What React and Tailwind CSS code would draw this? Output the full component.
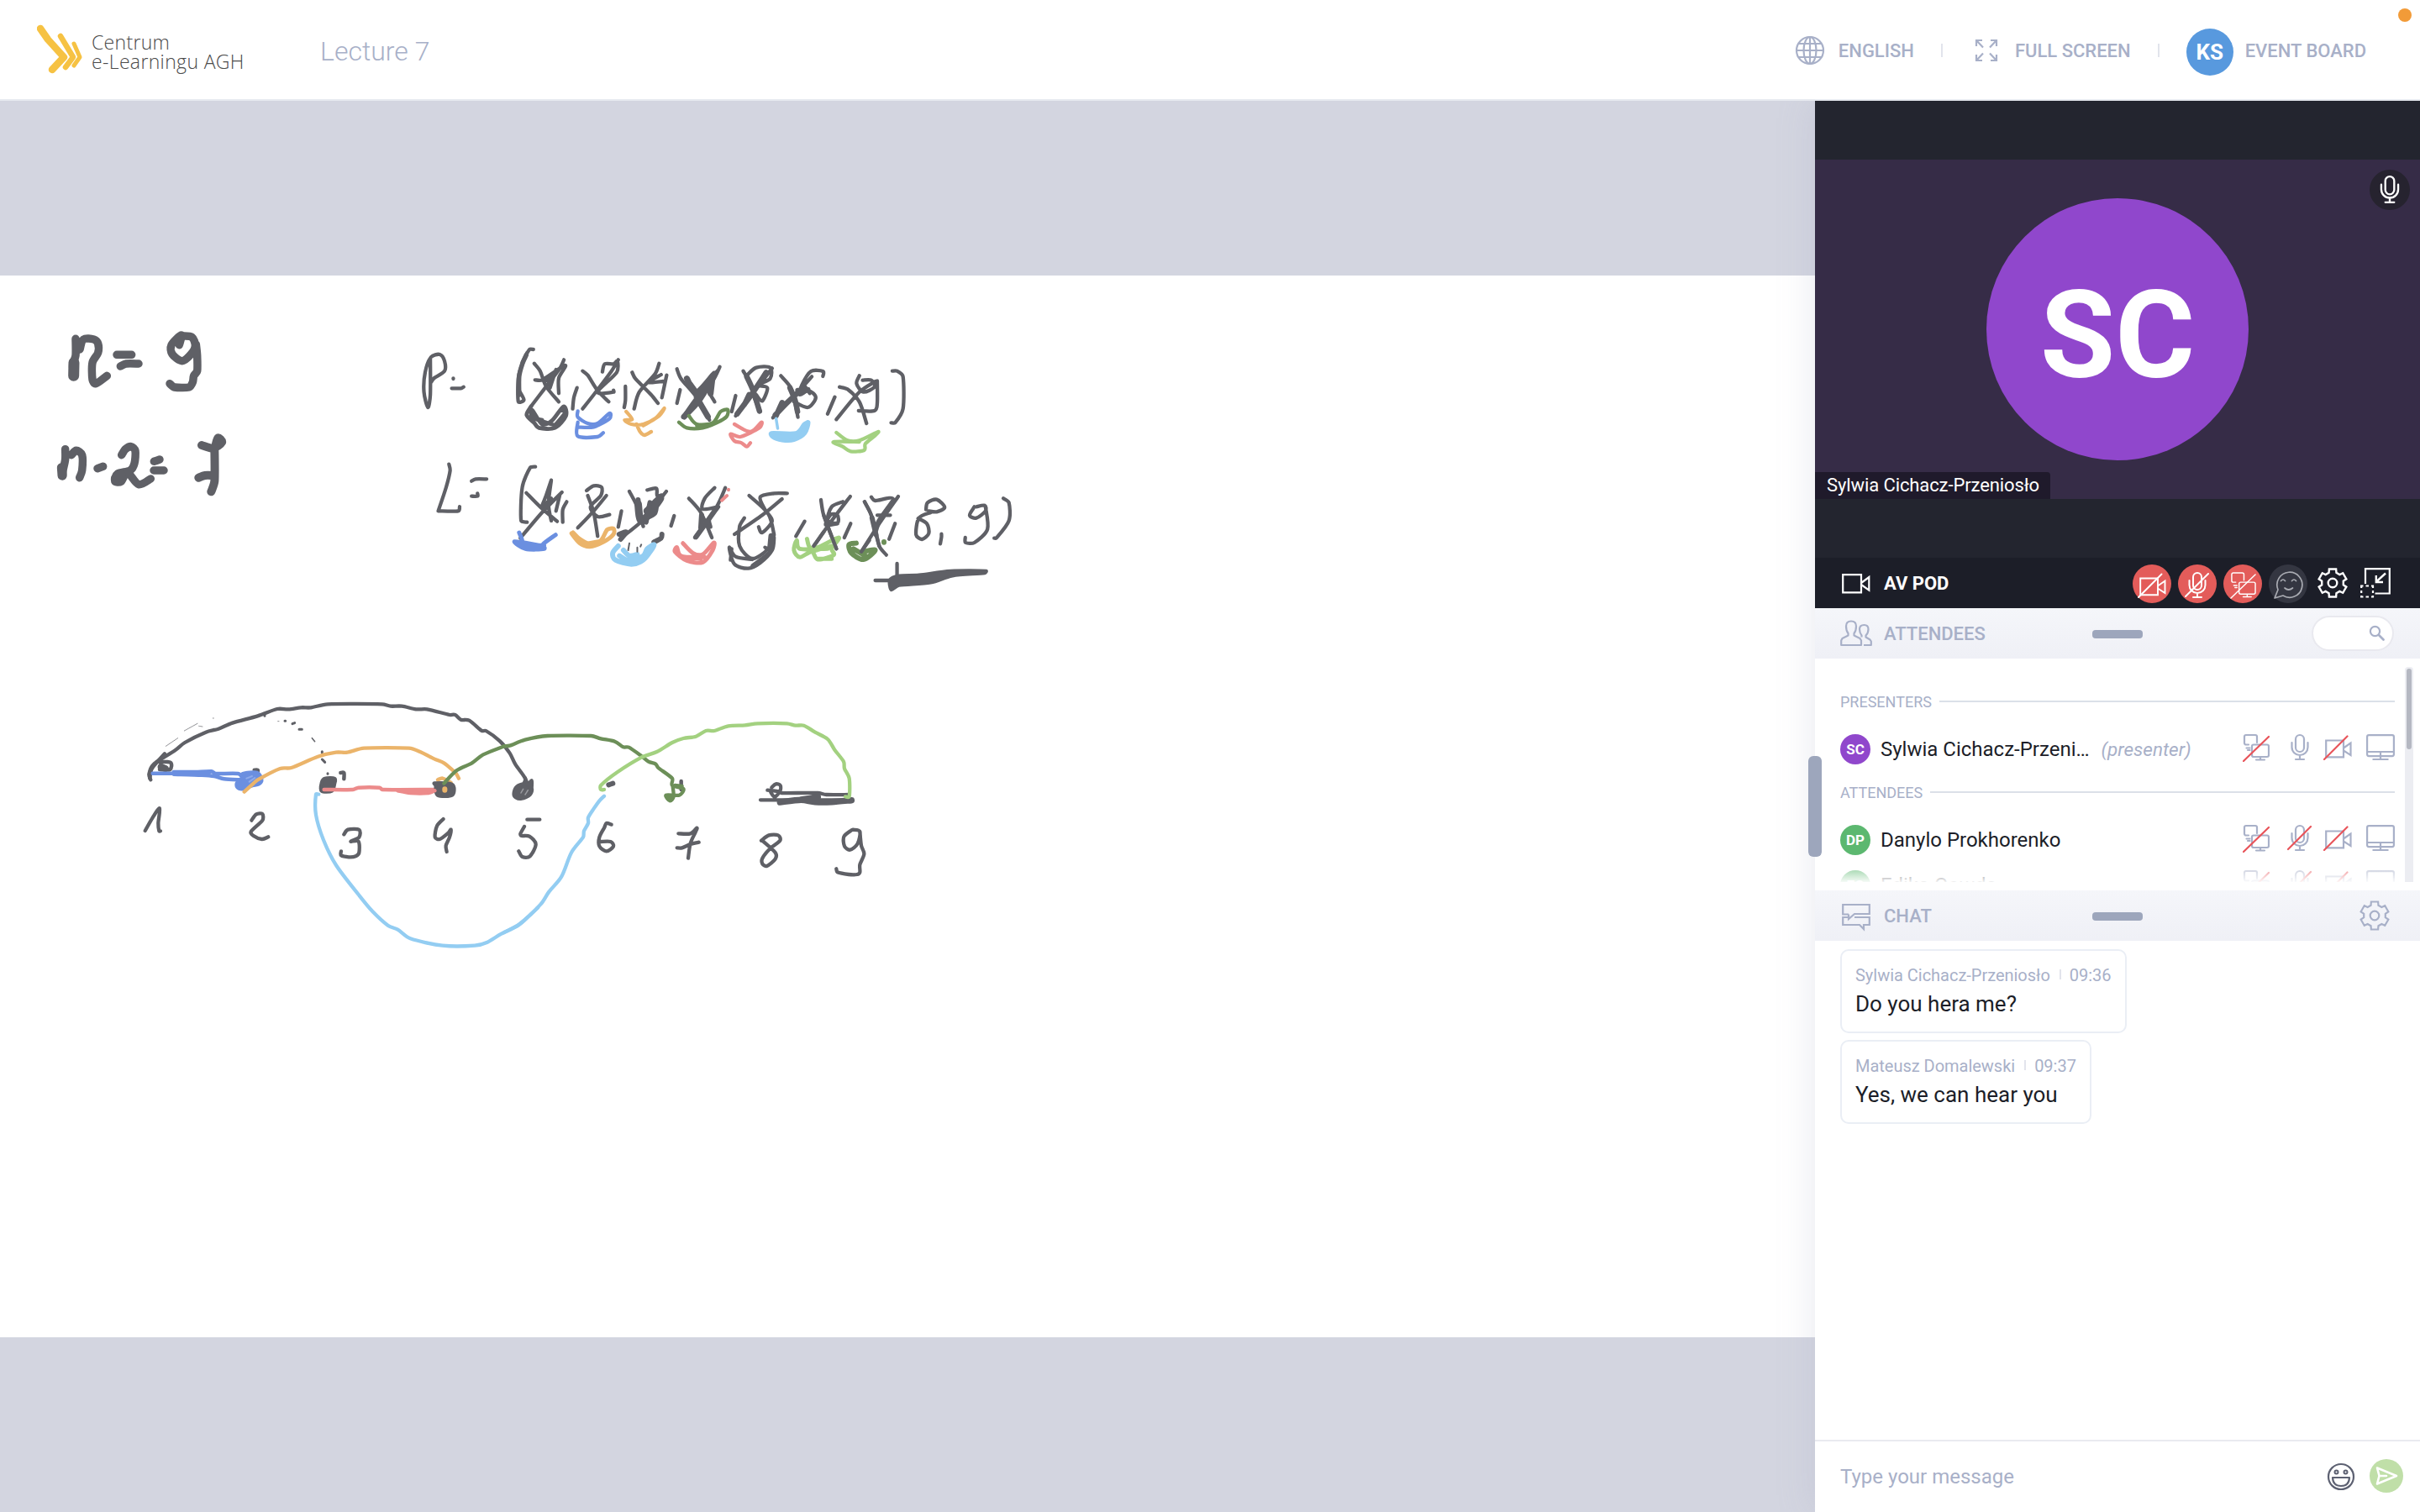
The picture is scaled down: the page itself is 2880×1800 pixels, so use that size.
import React from "react";

const INK = "#5f6066";
const BLUE = "#6b8fe0";
const ORANGE = "#ebb46a";
const SKY = "#93cdf2";
const RED = "#ec8b8b";
const GREEN = "#6c8f58";
const LIME = "#a3d180";

/* Turns an absolute M/L/H/V/Z polyline into a softly rounded pen curve. */
function soften(d) {
  return d
    .split("M")
    .filter(Boolean)
    .map((part) => {
      const closed = part.includes("Z");
      const pts = [];
      const tokens = `L${part}`.match(/[LHV][^LHVZ]*/g);
      tokens.forEach((tok) => {
        const n = (tok.slice(1).match(/-?[\d.]+/g) || []).map(Number);
        const last = pts[pts.length - 1];
        if (tok[0] === "H") pts.push([n[0], last[1]]);
        else if (tok[0] === "V") pts.push([last[0], n[0]]);
        else for (let i = 0; i + 1 < n.length; i += 2) pts.push([n[i], n[i + 1]]);
      });
      const count = pts.length;
      const at = (i) => (closed ? pts[(i + count) % count] : pts[Math.max(0, Math.min(count - 1, i))]);
      let out = `M${pts[0][0]} ${pts[0][1]}`;
      const end = closed ? count : count - 1;
      for (let i = 0; i < end; i += 1) {
        const [a, b, c, e] = [at(i - 1), at(i), at(i + 1), at(i + 2)];
        const len = Math.hypot(c[0] - b[0], c[1] - b[1]);
        const handle = (p, q) => {
          const dx = q[0] - p[0];
          const dy = q[1] - p[1];
          const m = Math.hypot(dx, dy) || 1;
          const k = Math.min(m / 6.5, len / 3) / m;
          return [dx * k, dy * k];
        };
        const h1 = handle(a, c);
        const h2 = handle(b, e);
        out += `C${(b[0] + h1[0]).toFixed(1)} ${(b[1] + h1[1]).toFixed(1)} ${(c[0] - h2[0]).toFixed(1)} ${(c[1] - h2[1]).toFixed(1)} ${c[0]} ${c[1]}`;
      }
      return out + (closed ? "Z" : "");
    })
    .join("");
}

/* One pen stroke (or several) of the whiteboard. */
function Pen({ d, c = INK, w = 4.3, fill = "none" }) {
  return (
    <path
      d={soften(d)}
      stroke={c}
      strokeWidth={w}
      fill={fill}
      strokeLinecap="round"
      strokeLinejoin="round"
      vectorEffect="non-scaling-stroke"
    />
  );
}

function Whiteboard() {
  return (
    <svg className="block h-[1264px] w-[2160px] bg-white" viewBox="0 328 2160 1264" fill="none">
      {/* n = 9, n - 2 = 7 */}
      <g transform="translate(40 360) scale(0.33333)">
        <Pen w={9.5} d="M150 130V190L140 222L143 265M165 168L178 132L215 132L230 147V180L210 215V275L222 290L262 262M297 187H350M310 228L330 219H375" />
        <Pen w={13} d="M144 215L143 262" />
        <Pen w={9.5} d="M520 152L527 117L492 152L495 185L530 209L562 185L577 155L565 124L530 120M580 150L584 190V245L572 262L568 285L555 303H503L486 290" />
        <Pen w={9.5} d="M113 524V560L105 600L104 620M135 545L152 529L173 545V600L164 626M228 593L248 586M314 545L328 524L348 515L363 530L360 575L345 600L300 612L290 638L312 640L335 608L375 650L418 630M430 568L450 561M429 600H465" />
        <Pen w={11} d="M100 590L102 618M292 630L312 615" />
        <Pen w={10} d="M600 510L640 521L672 500L658 484L650 510M646 520V638L634 676M589 626L612 618H640" />
      </g>

      {/* P and L sequences */}
      <g transform="translate(480 390) scale(0.47194 0.33333)">
        <Pen d="M68 110V240L62 285L52 230L55 160L70 105L92 96L104 120V155L78 180L70 195M126 181V183M122 217H145L152 212" />
        <Pen d="M328 78H318L300 130L290 180V265L304 258L292 225M312 90L300 125" />
        <Pen w={5.5} d="M310 98L300 130L292 175V240" />
        <Pen d="M330 128L345 155L360 210L392 265M405 115L395 145L355 220L320 285M332 187H350L408 135L392 180V235M398 140L362 190M385 150L370 215" />
        <Pen w={4.8} d="M322 282L311 312L330 340L342 358H382L410 315L404 282L375 332L350 345L325 295L325 320L350 330M396 295L410 300L385 345M330 325L380 348" />
        <Pen d="M438 215L430 250L427 290M452 155L465 170L490 225L518 265M542 115L525 155L480 240L452 290M502 158L508 130L530 130L540 120L538 160L490 230H530V224" />
        <Pen d="M560 210V260L557 285M577 160L585 182L625 240L642 270M645 128L635 165L595 230L582 290M650 168L618 195L655 192M664 170L652 250" />
        <Pen d="M698 222L690 270M690 148L700 182L740 250L772 330M798 140L780 190L740 250L705 320M795 150L765 205L785 265" />
        <Pen w={7} d="M715 182L740 230L785 165L745 262L708 318M722 200L742 240M740 250L768 318M780 175L775 235" />
        <Pen d="M838 243L828 300M857 155L875 200L885 250L900 300M930 145L900 200L860 270L838 315M868 168L890 143L925 143V182L895 205L918 215L905 262L890 240" />
        <Pen w={6.5} d="M866 175L882 225L898 298M915 160L880 235L842 308M872 240L860 275" />
        <Pen d="M952 172L975 210L985 250L995 320M1030 175L1000 222L960 280L932 322M1058 174V156H1028L1005 205L1000 240L1022 225L1040 250L1020 285L985 265M1010 205L1025 235" />
        <Pen w={6.5} d="M975 215L988 260L994 300M1008 215L970 265L938 312M955 268L940 315M995 225L1020 222" />
        <Pen d="M1088 248L1070 308M1100 212L1120 220L1150 265L1168 342M1190 192L1150 230L1092 328M1150 172L1143 200L1160 230L1188 212L1180 188H1158M1195 190V270L1188 297H1148" />
        <Pen d="M1233 155H1245L1260 175V290L1240 340H1230" />
        <Pen c={BLUE} d="M440 298V320L465 342H490L520 306V325L480 355H440M440 338V388L490 390L504 376" />
        <Pen c={ORANGE} d="M562 300L577 328L558 330L575 345H605L635 325L658 288L645 315L605 350M588 345L597 372L608 384L625 372" />
        <Pen c={GREEN} d="M720 315L740 345L780 340L800 300L818 293L815 318L790 340L755 358H715L695 338M740 350L770 348" />
        <Pen c={RED} d="M835 345L875 372L903 338L898 358L850 390L825 380L835 405L853 412L866 425L875 412" />
        <Pen c={SKY} w={3.5} d="M940 325L944 360" />
        <Pen c={SKY} fill={SKY} d="M928 376H990L1010 345L1022 338L1013 378L985 402L955 403L930 390Z" />
        <Pen c={LIME} d="M1092 375L1120 403H1150L1197 372L1190 385L1165 415L1162 438L1128 442L1108 425L1085 408H1150" />

        <Pen d="M115 488L118 510L108 570L88 655M88 655H138L142 640M172 548L182 541H210M172 602H187V592" />
        <Pen d="M333 497L320 500L300 570L297 690L312 695M310 590L345 640L388 692M400 588L350 660L295 752M373 545L360 600L350 640L373 610M373 545L366 630L373 690M395 595L385 655M412 622L402 650V695" />
        <Pen d="M465 600L480 660L490 745M512 600L480 655L440 715M462 582L480 565L500 570L498 600L472 640L490 675L520 668M550 655L542 712" />
        <Pen d="M570 585L590 640L605 710M663 585L610 680L555 745M615 580L638 574L640 600L652 598M640 635L635 665L610 685" />
        <Pen w={9} d="M592 630L602 690L648 610L615 655" />
        <Pen w={6} d="M544 738L562 730L548 756M652 738L650 752L632 766M592 615L598 690M622 625L612 695" />
        <Pen d="M683 672L675 708M720 610L750 660L778 750M812 572L790 640L735 750M785 572L760 610L755 648L795 640M795 640L772 680L775 712" />
        <Pen w={6} d="M790 645L738 748M752 670L750 715" />
        <Pen d="M872 600L920 665L935 740M955 612L905 670L835 738M968 592H935L900 605L912 650L930 690L905 732L896 712M860 680L848 710V780L880 825L920 790L935 740" />
        <Pen d="M935 750L930 795L900 840L870 860L835 845L822 785L838 818L880 828M828 790L825 830M912 785L925 800L880 850" />
        <Pen w={7} d="M928 745L925 790" />
        <Pen d="M1012 692L990 745M1053 615L1060 670L1092 790M1127 603L1080 690L1035 780M1108 622L1080 640L1070 690L1095 697V670L1078 668L1065 705L1095 700M1128 700L1112 750" />
        <Pen d="M1163 622L1180 670L1200 780L1218 812M1248 603L1200 700L1155 800M1180 605L1190 618L1235 612L1205 690M1195 670H1228M1240 700L1225 755" />
        <Pen w={6} d="M1235 620L1200 690L1190 730M1182 680L1192 740" />
        <Pen d="M1318 650L1322 625L1345 614L1365 642L1345 658L1325 655M1330 660L1300 680L1293 740L1308 756L1325 735L1320 700L1298 682M1357 737V748L1354 772" />
        <Pen d="M1440 640L1428 670L1445 680L1468 655L1466 635L1445 640M1468 640L1473 720L1440 768H1418L1417 750M1513 610L1527 625V690L1495 752H1490" />
        <Pen c={BLUE} w={5} d="M292 732L300 765H280L308 790H355L352 774L384 740M300 778H355M305 768L350 780" />
        <Pen c={ORANGE} w={5} d="M424 735L445 770L470 782L505 765L530 738V718L514 722L498 760L470 772L445 755L428 732M450 775L500 762" />
        <Pen c={SKY} w={6} d="M542 780L528 805L535 830L575 845L605 830L625 795L632 775L615 790L605 815L570 832L545 815M555 795L570 815L590 810" />
        <Pen w={2} d="M570 770L567 795M590 785V800M600 775L598 782" />
        <Pen c={RED} w={5} d="M705 770L730 805L755 810L783 768L780 795L755 838L715 832L685 800L690 785L700 815L750 825M710 820H760" />
        <Pen c={RED} w={4} d="M820 578V580M803 617L816 600" />
        <Pen c={LIME} w={5} d="M1018 755L1025 785H1045L1098 750L1080 790L1085 812L1045 828L1030 800L1000 820L985 795L992 760L1000 790H1070M1030 800L1080 780M1045 826H1080" />
        <Pen c={GREEN} w={6} d="M1142 770L1124 775L1130 805L1160 828L1190 795L1160 800M1135 790L1165 815M1212 765V767" />
        <Pen d="M1163 622L1180 670L1200 780M1060 670L1092 790M1060 730L1035 780M1175 760L1155 800" />
        <Pen d="M1190 903H1240M1245 843V900" />
        <Pen w={3} fill={INK} d="M1230 938L1226 900L1250 885L1300 882L1380 868H1470L1466 878L1385 888L1330 912L1250 922Z" />
      </g>

      {/* Tree over nodes 1 - 5 */}
      <g transform="translate(140 800) scale(0.33333)">
        <Pen w={0.7} d="M172 265L215 236M238 210L285 184M290 193L303 195M340 165H343M572 176H576" />
        <Pen w={3} d="M525 155V157M597 175H599M624 185L632 182M648 205H658M730 312L740 322M730 284V288M750 362V364" />
        <Pen w={1.5} d="M694 236L704 248" />
        <Pen w={4.3} d="M118 385L112 365L128 330L205 280L240 252L315 215L360 203L410 182L500 157L570 132L610 133L655 127H690L750 115H945L975 122H1015L1065 133H1105L1185 153H1205L1225 170L1255 173L1300 210H1315L1365 247L1400 290L1420 330L1455 380L1450 400" />
        <Pen w={4.5} d="M115 380L122 345L168 292M140 320L188 323L187 348L150 348" />
        <Pen w={8} d="M155 338L170 345" />
        <Pen w={4.5} d="M488 350H500V356" />
        <Pen c={BLUE} w={4.5} d="M125 362H200L335 355L350 363H430L450 380M200 357H330M200 365L300 368L345 372L380 382L440 385" />
        <Pen c={BLUE} fill={BLUE} w={3} d="M445 362L500 358L516 385L505 402L480 408L445 420L425 412L424 395L440 385Z" />
        <Pen c="#8fabea" w={2} d="M460 380L480 372M470 392L490 378" />
        <Pen c={ORANGE} w={4.3} d="M452 428L485 398L500 385L580 345L620 342L715 302L780 287H820L880 272H1040L1080 285L1130 310L1165 325L1195 350L1208 362L1218 380" />
        <Pen w={4} fill={INK} d="M740 380H775V398L765 425H728V395Z" />
        <Pen w={4.5} d="M796 360H808V382" />
        <Pen c={RED} w={4.5} d="M737 420H840L860 413H935L945 420H1132M1000 424L1045 432H1110L1132 424" />
        <Pen c={ORANGE} w={4.5} d="M1143 385L1160 380L1190 395" />
        <Pen w={4} fill={INK} d="M1130 397L1195 402V440H1142L1135 405Z" />
        <Pen c={RED} w={4.5} d="M1110 424H1132" />
        <Pen c={ORANGE} w={6} d="M1168 418V422" />
        <Pen c={GREEN} w={4.3} d="M1165 398L1210 352L1265 325L1305 295L1380 265" />
        <Pen c={SKY} w={4.3} d="M718 437H708V510L735 600L780 690L860 795L910 855L965 905L1000 920L1045 952L1160 977H1275L1320 965L1370 935L1430 905L1470 870L1500 842" />
        <Pen d="M98 567L125 520L150 487L145 540L148 568H153" />
        <Pen d="M478 530L495 508L517 507V530L476 570L485 585L515 597L538 589" />
        <Pen d="M808 580L822 563H862V590L832 605H860L862 645L850 658L825 661L798 655V640" />
        <Pen d="M1163 525L1140 550L1133 590L1150 597L1180 575L1190 563L1185 590L1172 620L1175 642" />
      </g>

      {/* Tree over nodes 5 - 9 */}
      <g transform="translate(600 820) scale(0.33333)">
        <Pen w={4.5} fill={INK} d="M35 375L45 350L75 340L98 355L92 378L62 392L42 388Z" />
        <Pen w={4.5} d="M75 320L85 340L98 328V350" />
        <Pen c="#9a9ba0" w={1.5} d="M60 372L68 358M75 378L85 362" />
        <Pen d="M82 467H127M72 492L58 518L62 525L90 527L113 555L92 598L65 600L52 580" />
        <Pen w={6} d="M373 343L388 338" />
        <Pen d="M383 485L365 480L358 495L340 530V562L365 580L390 563L380 546H345" />
        <Pen w={4.5} d="M632 330V360" />
        <Pen d="M622 517H665L688 497L683 512L665 552L657 605M617 568H635L665 555L695 548" />
        <Pen d="M918 542L945 523L978 523L985 542L950 570L922 605V625L938 633L968 608V585L925 545" />
        <Pen d="M1240 505L1213 528L1215 562L1235 575L1262 553L1270 510L1245 503M1270 510L1275 560L1285 590L1270 628V655L1260 663H1230L1190 655L1186 643" />
        <Pen w={4.3} d="M940 362L985 368L990 372H1120L1150 378H1230M915 397H1240M955 352L970 340L986 345L985 365L966 386L952 370" />
        <Pen w={7.5} d="M985 405L1060 397L1110 404H1170L1240 398M1060 396L1120 386" />
        <Pen c={GREEN} w={4.3} d="M0 205L20 203L75 182L155 168H310L345 178L395 188L425 208L445 209L490 240L515 260L540 268L550 282L600 320V345L640 357L625 380H578L592 400L605 385L602 350M610 345L635 348M580 388L600 390" />
        <Pen c={LIME} w={4.3} d="M357 360H345V345L405 297L490 245L545 225L600 192L640 177L685 170L720 150H750L800 133L860 130L905 124H1010L1040 131H1070L1110 155L1155 180L1180 218L1212 260L1215 285L1232 320V385H1218" />
        <Pen c={SKY} w={4.3} d="M0 870L55 840L130 770L160 725L205 670L240 585L282 530L285 508L300 480V460L320 428L340 400L357 383" />
      </g>
    </svg>
  );
}

function Logo() {
  return (
    <svg className="h-[60px] w-[56px]" viewBox="0 0 56 60" fill="none" stroke="#f6c243" strokeLinecap="round" strokeLinejoin="round">
      <path d="M4 5L13 18L32 39L18 54" strokeWidth="8.5" />
      <path d="M28 14L43 39L34 51" strokeWidth="6.5" />
      <path d="M44 23L51 39L44 49" strokeWidth="5" />
    </svg>
  );
}

function VideoIcon({ className, sw = 2 }) {
  return (
    <svg className={className} viewBox="0 0 34 24" fill="none" stroke="currentColor" strokeWidth={sw}>
      <path d="M1.200 1.200H23V22.300H1.200ZM23 11L32.300 4V19.600L23 13" />
    </svg>
  );
}

/* Status glyphs with an optional slash through them. */
function NetIcon({ className, slash = "#e8545a", sw = 2.2 }) {
  return (
    <svg className={className} viewBox="0 0 32 34" fill="none" stroke="currentColor" strokeWidth={sw} strokeLinecap="round" strokeLinejoin="round">
      <path d="M7 13.500H4a2 2 0 0 1-2-2V4a2 2 0 0 1 2-2h11a2 2 0 0 1 2 2v7M4.500 17.500h4M6 20h2.500" />
      <rect x="11" y="13.500" width="20" height="14.500" rx="2" />
      <path d="M16 31.500h10M21 29v2" />
      <path d="M1 33L31 4" stroke={slash} />
    </svg>
  );
}

function MicIcon({ className, slash, sw = 2.2 }) {
  return (
    <svg className={className} viewBox="0 0 30 34" fill="none" stroke="currentColor" strokeWidth={sw} strokeLinecap="round">
      <rect x="10" y="2" width="10" height="20" rx="5" />
      <path d="M5.500 11v5.500a9.500 9.500 0 0 0 19 0V11M15 26v4.500M10 31h10" />
      {slash ? <path d="M1 30L28 3" stroke={slash} /> : null}
    </svg>
  );
}

function CamOffIcon({ className, slash = "#e8545a", sw = 2.2 }) {
  return (
    <svg className={className} viewBox="0 0 34 30" fill="none" stroke="currentColor" strokeWidth={sw}>
      <path d="M3.200 6.500H24V26.300H3.200ZM24 15.500L32.500 9.500V24L24 18.500" />
      <path d="M1 29L28.500 1.500" stroke={slash} strokeLinecap="round" />
    </svg>
  );
}

function MonitorIcon({ className }) {
  return (
    <svg className={className} viewBox="0 0 34 32" fill="none" stroke="currentColor" strokeWidth="2.200" strokeLinejoin="round">
      <rect x="1.100" y="1.100" width="31.800" height="25" rx="2" />
      <path d="M1 21H33M17 21V30M7.500 30H26.500" />
    </svg>
  );
}

function gearPath(c, outer, inner) {
  const pts = [];
  const rad = Math.PI / 180;
  for (let k = 0; k < 6; k += 1) {
    const a = k * 60 - 90;
    [
      [inner, a - 20],
      [outer, a - 14],
      [outer, a + 14],
      [inner, a + 20],
    ].forEach(([r, t]) => pts.push(`${(c + r * Math.cos(t * rad)).toFixed(2)} ${(c + r * Math.sin(t * rad)).toFixed(2)}`));
  }
  return `M${pts.join("L")}Z`;
}

function GearIcon({ className, sw = 2.2 }) {
  return (
    <svg className={className} viewBox="0 0 36 36" fill="none" stroke="currentColor" strokeWidth={sw}>
      <path d={gearPath(18, 17, 13)} />
      <circle cx="18" cy="18" r="5.300" />
    </svg>
  );
}

function RoundButton({ className, children }) {
  return <div className={`flex size-[46px] items-center justify-center rounded-full ${className}`}>{children}</div>;
}

function Header() {
  return (
    <header className="relative z-10 flex h-[120px] shrink-0 items-center border-b-2 border-[#e7eaf0] bg-white pr-[64px] pl-[44px] text-[#a8b0c8]">
      <Logo />
      <div className="mt-[3px] ml-[9px] w-[182px] pt-[3px] font-['Open_Sans'] text-[23px] leading-[23px] font-light whitespace-nowrap text-[#4a4a4a]">
        <div className="tracking-[0.300px]">Centrum</div>
        <div className="tracking-[0.350px]">e-Learningu AGH</div>
      </div>
      <div className="ml-[90px] pt-[4px] text-[32px] font-light">Lecture 7</div>
      <div className="ml-auto flex items-center text-[22px] font-medium">
        <svg className="mt-[2px] mr-[16px] size-[36px]" viewBox="0 0 36 36" fill="none" stroke="currentColor" strokeWidth="2.200">
          <circle cx="18" cy="18" r="16" />
          <ellipse cx="18" cy="18" rx="7.500" ry="16" />
          <path d="M18 2V34M2 18H34M4.500 10H31.500M4.500 26H31.500" />
        </svg>
        <span className="pt-[4px]">ENGLISH</span>
        <i className="mt-[2px] ml-[32px] h-[16px] w-[2px] bg-[#e2e4ec]" />
        <svg className="mt-[2px] ml-[38px] size-[28px]" viewBox="0 0 28 28" fill="none" stroke="currentColor" strokeWidth="2.200">
          <path d="M2 9V2H9M2 2L10 10.500M19 2H26V9M26 2L18 10.500M26 19V26H19M26 26L18 17.500M9 26H2V19M2 26L10 17.500" />
        </svg>
        <span className="ml-[20px] pt-[4px]">FULL SCREEN</span>
        <i className="mt-[2px] ml-[32px] h-[16px] w-[2px] bg-[#e2e4ec]" />
        <div className="mt-[6px] ml-[32px] flex size-[56px] items-center justify-center rounded-full bg-[#5899de] pt-[2px] text-[26px] font-bold text-white">KS</div>
        <span className="ml-[14px] pt-[4px]">EVENT BOARD</span>
      </div>
    </header>
  );
}

function AvPod() {
  return (
    <section className="shrink-0 bg-[#23252f]">
      <div className="h-[70px]" />
      <div className="relative flex h-[404px] items-center justify-center bg-[#362c47]">
        <div className="flex size-[312px] items-center justify-center rounded-full bg-[#9047cc] pt-[14px] text-[145px] leading-none font-bold text-white">SC</div>
        <div className="absolute top-[12px] right-[12px] flex size-[48px] items-center justify-center rounded-full bg-[#26232f] text-white">
          <MicIcon className="h-[36px] w-[32px]" />
        </div>
        <div className="absolute bottom-0 left-0 flex h-[32px] w-[280px] items-center rounded-tr-[4px] bg-[#1f1a2b] pt-[1px] pl-[14px] text-[22px] tracking-[-0.100px] whitespace-nowrap text-white">
          Sylwia Cichacz-Przeniosło
        </div>
      </div>
      <div className="h-[70px]" />
      <div className="flex h-[60px] items-center bg-[#1c1e28] pr-[35px] pl-[32px] text-white">
        <VideoIcon className="mt-[2px] h-[24px] w-[34px]" sw={2.2} />
        <span className="ml-[16px] pt-[2px] text-[22px] font-bold">AV POD</span>
        <div className="mt-[2px] ml-auto flex items-center gap-[8px]">
          <RoundButton className="bg-[#e35c5a]"><CamOffIcon className="mt-[4px] h-[30px] w-[34px]" slash="#fff" sw={1.9} /></RoundButton>
          <RoundButton className="bg-[#e35c5a]"><MicIcon className="mt-[4px] h-[34px] w-[30px]" slash="#fff" sw={2} /></RoundButton>
          <RoundButton className="bg-[#e35c5a]"><NetIcon className="mt-[2px] h-[33px] w-[31px]" slash="#fff" sw={1.5} /></RoundButton>
          <RoundButton className="bg-[#343641] text-[#a9abb2]">
            <svg className="mt-[2px] h-[36px] w-[36px]" viewBox="0 0 36 36" fill="none" stroke="currentColor" strokeWidth="1.700" strokeLinecap="round" strokeLinejoin="round">
              <path d="M6 24a15 15 0 1 1 6 7L2 34Z" />
              <path d="M9.500 13.500q2.500-3 5 0M22.500 13.500q2.500-3 5 0M14 22q4.500 4 9.500 0" />
            </svg>
          </RoundButton>
          <GearIcon className="-mt-[2px] ml-[4px] size-[36px]" sw={2.4} />
          <svg className="-mt-[2px] ml-[7px] size-[36px]" viewBox="0 0 36 36" fill="none" stroke="currentColor" strokeWidth="2.200">
            <path d="M6 19V1.200H34.800V30.500H17.500" />
            <path d="M30 6.500L19 16.500M18.800 9V17H27" strokeWidth="2.400" />
            <path d="M0 21.500H3.500M6.500 21.500H10M13 21.500H16M1.200 21V24M15 21V24M1.200 27V30M15 27V30M0 34.500H3.500M6.500 34.500H10M13 34.500H16M1.200 33V35M15 33V35" />
          </svg>
        </div>
      </div>
    </section>
  );
}

function PanelHeader({ icon, title, children }) {
  return (
    <div className="grid h-[60px] shrink-0 grid-cols-[1fr_60px_1fr] items-center bg-gradient-to-b from-[#f5f6fa] to-[#eff0f6] text-[#a8b0c8]">
      <div className="flex items-center pl-[30px]">
        <div className="flex w-[52px] items-center">{icon}</div>
        <span className="pt-[2px] text-[22px] font-medium">{title}</span>
      </div>
      <div className="mt-[2px] h-[10px] rounded-[4px] bg-[#9da6bc]" />
      <div className="flex justify-end">{children}</div>
    </div>
  );
}

function GroupTitle({ children }) {
  return (
    <div className="flex h-[28px] items-center text-[18px] text-[#a8b0c8]">
      <span className="pt-[2px]">{children}</span>
      <i className="ml-[9px] h-[2px] flex-1 bg-[#dbe0e8]" />
    </div>
  );
}

function Attendee({ initials, color, name, role, mic }) {
  return (
    <div className="flex h-[54px] items-center">
      <div className={`flex size-[36px] items-center justify-center rounded-full pt-[1px] text-[17px] font-bold text-white ${color}`}>{initials}</div>
      <span className="ml-[12px] text-[24px] whitespace-nowrap text-[#1c1e28]">{name}</span>
      {role ? <span className="ml-[14px] text-[22.500px] text-[#a8b0c8] italic">{role}</span> : null}
      <div className="mb-[4px] ml-auto flex items-center text-[#a8b0c8]">
        <NetIcon className="h-[34px] w-[32px]" />
        <MicIcon className="ml-[21px] h-[34px] w-[30px]" slash={mic ? null : "#e8545a"} />
        <CamOffIcon className="ml-[13px] h-[30px] w-[34px]" />
        <MonitorIcon className="ml-[17px] h-[32px] w-[34px]" />
      </div>
    </div>
  );
}

function Attendees() {
  return (
    <section className="shrink-0">
      <PanelHeader
        title="ATTENDEES"
        icon={
          <svg className="h-[32px] w-[38px]" viewBox="0 0 38 32" fill="none" stroke="currentColor" strokeWidth="2.200" strokeLinejoin="round">
            <path d="M1.200 30V24.500L2.500 22L9.500 18.500V16Q7 13 7 7.500Q7 1.500 13 1.500Q19 1.500 19 7.500Q19 13 16.500 16V18.500L23.500 22L25 24.500V30Z" />
            <path d="M28 30H36.800V25.500L35.500 23.500L30.500 20.500V18.500Q33.500 15.500 33.500 11Q33.500 6 28.500 6Q23 6 23 11Q23 15.500 25.500 18.500V20.500" />
          </svg>
        }
      >
        <div className="mr-[31px] flex h-[42px] w-[98px] items-center justify-end rounded-full border-2 border-[#e9e9ef] bg-white pr-[8px]">
          <svg className="size-[20px]" viewBox="0 0 20 20" fill="none" stroke="currentColor" strokeWidth="2.200" strokeLinecap="round">
            <circle cx="7.500" cy="7.500" r="5.600" />
            <path d="M12 12L17.500 17.500" strokeWidth="2.800" />
          </svg>
        </div>
      </PanelHeader>
      <div className="relative h-[276px] bg-white pt-[37px] pr-[30px] pl-[30px]">
        <div className="h-[229px] overflow-hidden">
          <GroupTitle>PRESENTERS</GroupTitle>
          <div className="pt-[16px] pb-[10px]">
            <Attendee initials="SC" color="bg-[#9047cc]" name="Sylwia Cichacz-Przeni…" role="(presenter)" mic />
          </div>
          <GroupTitle>ATTENDEES</GroupTitle>
          <div className="pt-[16px]">
            <Attendee initials="DP" color="bg-[#5cb870]" name="Danylo Prokhorenko" />
            <Attendee initials="EG" color="bg-[#5cb870]" name="Edika Gowda" />
          </div>
        </div>
        <div className="absolute right-[18px] bottom-[8px] left-0 h-[32px] bg-gradient-to-b from-white/0 to-white" />
        <div className="absolute top-[10px] right-[8px] h-[256px] w-[10px] rounded-t-[4px] bg-[#ecedf2] p-[2px]">
          <div className="h-[96px] rounded-[3px] bg-[#b5b8c2]" />
        </div>
      </div>
    </section>
  );
}

function Message({ author, time, text }) {
  return (
    <div className="h-[100px] rounded-[10px] border-2 border-[#eaeef5] px-[16px] pt-[14px]">
      <div className="flex h-[30px] items-center text-[20px] tracking-[-0.020px] text-[#a8b0c8]">
        <span>{author}</span>
        <i className="-mt-[2px] mr-[10px] ml-[11px] h-[12px] w-[2px] bg-[#e2e4ec]" />
        <span>{time}</span>
      </div>
      <div className="text-[26px] leading-[38px] text-[#1c1e28]">{text}</div>
    </div>
  );
}

function Chat() {
  return (
    <section className="flex min-h-0 flex-1 flex-col">
      <PanelHeader
        title="CHAT"
        icon={
          <svg className="mt-[3px] ml-[2px] h-[34px] w-[34px]" viewBox="0 0 34 34" fill="none" stroke="currentColor" strokeWidth="2.200">
            <path d="M8 13.500H1.200V2H32.800V13H15L8 19V13.500M8 17H1.200V26H21L26 31V26H32.800V17H15" />
          </svg>
        }
      >
        <GearIcon className="mr-[36px] size-[36px]" />
      </PanelHeader>
      <div className="flex flex-1 flex-col items-start gap-[8px] pt-[10px] pl-[30px]">
        <Message author="Sylwia Cichacz-Przeniosło" time="09:36" text="Do you hera me?" />
        <Message author="Mateusz Domalewski" time="09:37" text="Yes, we can hear you" />
      </div>
      <div className="flex h-[86px] items-center border-t-2 border-[#e9eaf0] pr-[20px] pl-[30px]">
        <span className="text-[24px] text-[#a8b0c8]">Type your message</span>
        <svg className="ml-auto size-[34px]" viewBox="0 0 34 34" fill="none" stroke="#5d6172" strokeWidth="2.200" strokeLinejoin="round">
          <circle cx="17" cy="17" r="15" />
          <circle cx="11.500" cy="11.500" r="2" strokeWidth="2" />
          <circle cx="22.500" cy="11.500" r="2" strokeWidth="2" />
          <path d="M7 18H27Q26.500 28 17 28Q7.500 28 7 18Z" />
        </svg>
        <div className="mb-[3px] ml-[17px] flex size-[40px] items-center justify-center rounded-full bg-[#c0dfa8]">
          <svg className="size-[28px]" viewBox="0 0 28 28" fill="none" stroke="#fff" strokeWidth="2.600" strokeLinejoin="round" strokeLinecap="round">
            <path d="M3 4.500L26 14L3 23.500L5.500 14ZM5.500 14H14" />
          </svg>
        </div>
      </div>
    </section>
  );
}

export default function App() {
  return (
    <div className="relative flex h-[1800px] w-[2880px] flex-col overflow-hidden bg-white font-[Roboto,sans-serif] leading-[1.2]">
      <Header />
      <div className="flex min-h-0 flex-1">
        <main className="flex w-[2160px] flex-col justify-center bg-[#d3d5e0]">
          <Whiteboard />
        </main>
        <aside className="relative flex w-[720px] flex-col bg-white shadow-[0_0_40px_rgba(160,165,190,0.25)]">
          <AvPod />
          <Attendees />
          <Chat />
          <div className="absolute top-[780px] -left-[8px] h-[120px] w-[16px] rounded-[6px] bg-[#9da6bc]" />
        </aside>
      </div>
      <div className="absolute top-[10px] right-[10px] z-20 size-[16px] rounded-full bg-[#f29b38]" />
    </div>
  );
}
